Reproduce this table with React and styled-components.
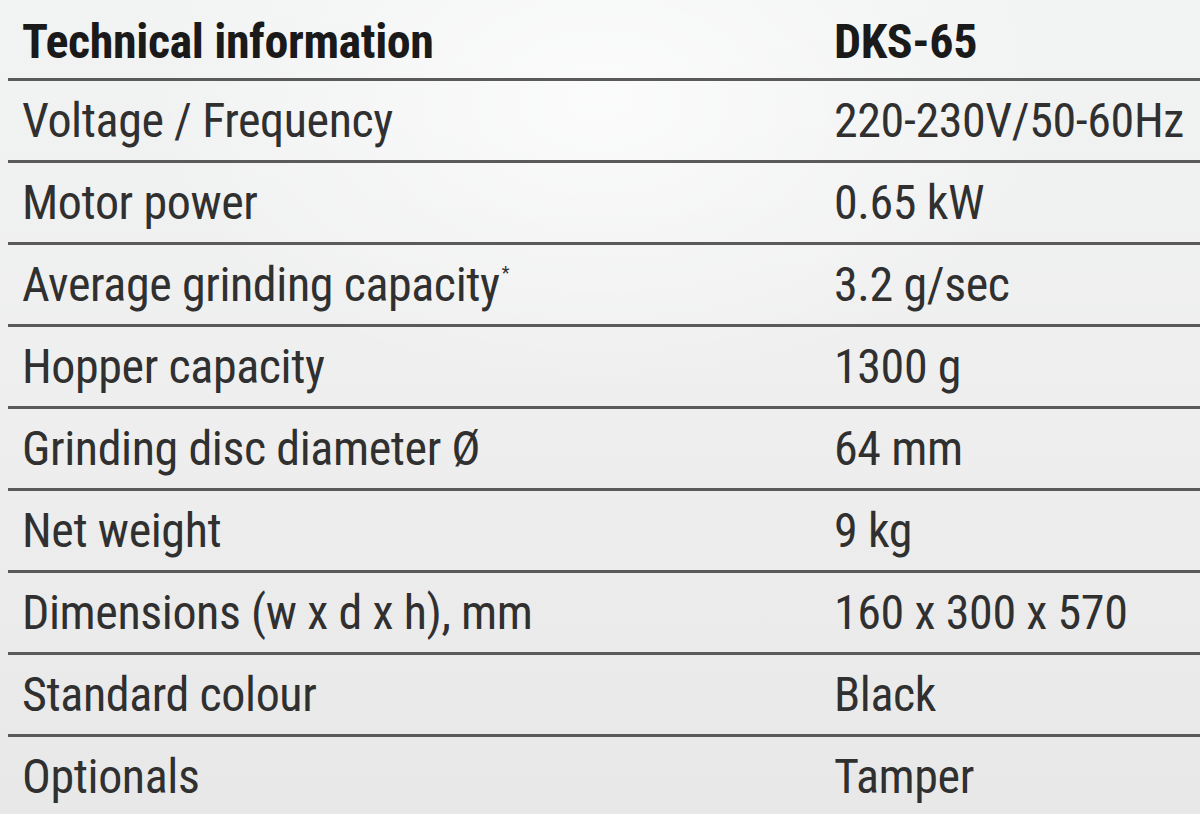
import styled, { createGlobalStyle } from 'styled-components';

const GlobalStyle = createGlobalStyle`
  html, body {
    margin: 0;
    padding: 0;
  }
  body {
    background: #efefef;
    font-family: "Roboto Condensed", "Liberation Sans", sans-serif;
  }
`;

const rows = [
  { label: 'Voltage / Frequency', value: '220-230V/50-60Hz' },
  { label: 'Motor power', value: '0.65 kW' },
  { label: 'Average grinding capacity', value: '3.2 g/sec', note: true },
  { label: 'Hopper capacity', value: '1300 g' },
  { label: 'Grinding disc diameter Ø', value: '64 mm' },
  { label: 'Net weight', value: '9 kg' },
  { label: 'Dimensions (w x d x h), mm', value: '160 x 300 x 570' },
  { label: 'Standard colour', value: 'Black' },
  { label: 'Optionals', value: 'Tamper' },
];

const App = () => {
  return (
    <>
      <GlobalStyle />
      <PageStyled>
        <TableStyled>
          <HeaderRowStyled>
            <CellStyled $bold>Technical information</CellStyled>
            <CellStyled $bold $value>
              DKS-65
            </CellStyled>
          </HeaderRowStyled>
          {rows.map((row) => (
            <RowStyled key={row.label}>
              <CellStyled>
                {row.label}
                {row.note && <NoteStyled>*</NoteStyled>}
              </CellStyled>
              <CellStyled $value>{row.value}</CellStyled>
            </RowStyled>
          ))}
        </TableStyled>
      </PageStyled>
    </>
  );
};

export default App;

const PageStyled = styled.main`
  width: 1200px;
  height: 814px;
  overflow: hidden;
  padding-left: 8px;
  box-sizing: border-box;
  background:
    radial-gradient(ellipse 650px 420px at 50% 12%, rgba(255, 255, 255, 0.7), rgba(255, 255, 255, 0) 70%),
    linear-gradient(180deg, #f2f3f3 0%, #eeeeee 55%, #e8e8e8 100%);
`;

const TableStyled = styled.section`
  display: flex;
  flex-direction: column;
`;

const HeaderRowStyled = styled.div`
  display: grid;
  grid-template-columns: 826px 1fr;
  height: 78px;
  padding-top: 2px;
  box-sizing: border-box;
  align-items: center;
`;

const RowStyled = styled.div`
  display: grid;
  grid-template-columns: 826px 1fr;
  height: 82px;
  box-sizing: border-box;
  border-top: 3px solid #5a5a5a;
  align-items: center;
`;

const CellStyled = styled.div`
  padding-left: ${(p) => (p.$value ? '0' : '14px')};
  font-size: 48px;
  line-height: 79px;
  font-weight: ${(p) => (p.$bold ? 700 : 400)};
  color: ${(p) => (p.$bold ? '#1a1a1a' : '#303030')};
  white-space: nowrap;
  letter-spacing: -0.4px;
`;

const NoteStyled = styled.sup`
  font-size: 18px;
  line-height: 0;
  vertical-align: 22px;
  margin-left: 2px;
`;
